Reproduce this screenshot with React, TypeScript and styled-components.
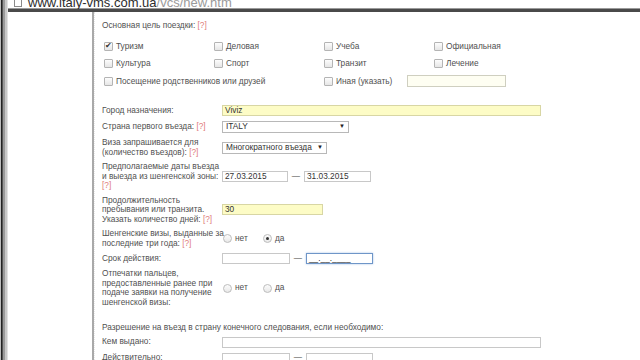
import styled, { createGlobalStyle } from 'styled-components';

const GlobalStyle = createGlobalStyle`
  html, body { margin: 0; padding: 0; background: #fff; }
  body {
    font-family: "Liberation Sans", Arial, sans-serif;
    overflow: hidden;
  }
`;

const Frame = styled.div`
  display: flex;
  height: 360px;
  width: 640px;
  overflow: hidden;
`;

const Stripe = styled.div`
  width: 8px;
  flex-shrink: 0;
  background: linear-gradient(
    to right,
    #bcbcbc 0 1px,
    #222 1px 2px,
    #555 2px 3px,
    #9a9a9a 3px 5px,
    #c8c8c8 5px 7px,
    #e2e2e2 7px 8px
  );
`;

const Window = styled.div`
  flex: 1;
  display: flex;
  flex-direction: column;
  min-height: 0;
`;

const AddressBar = styled.div`
  height: 9px;
  flex-shrink: 0;
  display: flex;
  align-items: flex-end;
  gap: 6px;
  padding-left: 6px;
  overflow: hidden;
  border-bottom: 3px solid #4a4a4a;
  box-shadow: 0 -1px 0 #9a9a9a inset;
`;

const PageIcon = styled.div`
  width: 6px;
  height: 9px;
  margin-bottom: 2px;
  border: 1px solid #8a8a8a;
  background: #fff;
  flex-shrink: 0;
`;

const Url = styled.div`
  font-size: 13px;
  line-height: 13px;
  color: #2c2c2c;
  white-space: nowrap;
  span { color: #9a9a9a; }
`;

const Body = styled.div`
  flex: 1;
  display: flex;
  min-height: 0;
`;

const Sidebar = styled.aside`
  width: 84px;
  flex-shrink: 0;
  background: #fff;
  border-right: 2px solid #a9a9a9;
`;

const Content = styled.main`
  flex: 1;
  padding: 8.5px 0 0 7px;
  color: #505050;
  font-size: 8.3px;
  line-height: 9.5px;
  border-left: 1px dotted #e6e6e6;
`;

const Hint = styled.span`
  color: #e07a7a;
`;

const SectionTitle = styled.div<{ $top?: number }>`
  margin-top: ${(p) => p.$top ?? 0}px;
  white-space: nowrap;
`;

const CheckGrid = styled.div`
  display: grid;
  grid-template-columns: repeat(4, 110px);
  grid-auto-rows: 17.5px;
  align-items: center;
  margin-top: 7.5px;
  padding-left: 2px;
`;

const CheckItem = styled.label<{ $span?: number }>`
  display: flex;
  align-items: center;
  gap: 3px;
  grid-column: span ${(p) => p.$span ?? 1};
  white-space: nowrap;
`;

const Box = styled.span<{ $on?: boolean }>`
  position: relative;
  width: 7px;
  height: 7px;
  border: 1px solid #b4b4b4;
  border-radius: 1px;
  background: linear-gradient(#fdfdfd, #e6e6e6);
  flex-shrink: 0;
  &::after {
    content: ${(p) => (p.$on ? "'✔'" : "''")};
    position: absolute;
    left: 0px;
    top: -2px;
    font-size: 8px;
    line-height: 10px;
    color: #333;
  }
`;

const OtherInput = styled.span`
  display: inline-block;
  width: 97px;
  height: 10px;
  margin-left: 12px;
  border: 1px solid #cfcfc0;
  background: #fefef2;
`;

const Form = styled.div<{ $top: number }>`
  margin-top: ${(p) => p.$top}px;
`;

const Row = styled.div`
  display: grid;
  grid-template-columns: 120px auto;
  align-items: center;
  padding: 2.5px 0;
`;

const Label = styled.div`
  white-space: nowrap;
`;

const Field = styled.div`
  display: flex;
  align-items: center;
`;

const Input = styled.div<{ $w: number; $yellow?: boolean; $focus?: boolean }>`
  box-sizing: border-box;
  width: ${(p) => p.$w}px;
  height: 11px;
  padding: 0 2px;
  font-size: 8.3px;
  line-height: 9px;
  color: #333;
  background: ${(p) => (p.$yellow ? '#fdfcc6' : '#fff')};
  border: 1px solid ${(p) => (p.$focus ? '#6f96c8' : p.$yellow ? '#d8d6a4' : '#c8c8c8')};
  box-shadow: ${(p) => (p.$focus ? '0 0 2px #a9c4e6' : 'none')};
  white-space: nowrap;
  overflow: hidden;
`;

const Select = styled.div<{ $w: number }>`
  box-sizing: border-box;
  width: ${(p) => p.$w}px;
  height: 12px;
  padding: 0 3px;
  display: flex;
  justify-content: space-between;
  align-items: center;
  font-size: 8.3px;
  color: #333;
  background: #fff;
  border: 1px solid #b8b8b8;
  white-space: nowrap;
  i {
    font-style: normal;
    font-size: 6px;
    color: #222;
  }
`;

const Dash = styled.span`
  width: 16px;
  text-align: center;
  color: #444;
`;

const Radios = styled.div`
  display: flex;
  align-items: center;
  padding-left: 1px;
`;

const RadioItem = styled.label`
  width: 40px;
  display: flex;
  align-items: center;
  gap: 3px;
`;

const Dot = styled.span<{ $on?: boolean }>`
  position: relative;
  width: 7px;
  height: 7px;
  border-radius: 50%;
  border: 1px solid #bdbdbd;
  background: linear-gradient(#fcfcfc, #e8e8e8);
  &::after {
    content: '';
    display: ${(p) => (p.$on ? 'block' : 'none')};
    position: absolute;
    left: 2px;
    top: 2px;
    width: 3px;
    height: 3px;
    border-radius: 50%;
    background: #333;
  }
`;

const purposes: { text: string; on?: boolean; span?: number }[] = [
  { text: 'Туризм', on: true },
  { text: 'Деловая' },
  { text: 'Учеба' },
  { text: 'Официальная' },
  { text: 'Культура' },
  { text: 'Спорт' },
  { text: 'Транзит' },
  { text: 'Лечение' },
  { text: 'Посещение родственников или друзей', span: 2 },
];

function Radio({ yes }: { yes?: boolean }) {
  return (
    <Radios>
      <RadioItem>
        <Dot />
        нет
      </RadioItem>
      <RadioItem>
        <Dot $on={yes} />
        да
      </RadioItem>
    </Radios>
  );
}

export default function App() {
  return (
    <>
      <GlobalStyle />
      <Frame>
        <Stripe />
        <Window>
          <AddressBar>
            <PageIcon />
            <Url>
              www.italy-vms.com.ua<span>/vcs/new.htm</span>
            </Url>
          </AddressBar>
          <Body>
            <Sidebar />
            <Content>
              <SectionTitle>
                Основная цель поездки: <Hint>[?]</Hint>
              </SectionTitle>
              <CheckGrid>
                {purposes.map((p) => (
                  <CheckItem key={p.text} $span={p.span}>
                    <Box $on={p.on} />
                    {p.text}
                  </CheckItem>
                ))}
                <CheckItem $span={2}>
                  <Box />
                  Иная (указать)
                  <OtherInput />
                </CheckItem>
              </CheckGrid>

              <Form $top={12.5}>
                <Row>
                  <Label>Город назначения:</Label>
                  <Field>
                    <Input $w={319} $yellow>Viviz</Input>
                  </Field>
                </Row>
                <Row>
                  <Label>
                    Страна первого въезда: <Hint>[?]</Hint>
                  </Label>
                  <Field>
                    <Select $w={127}>
                      ITALY<i>▼</i>
                    </Select>
                  </Field>
                </Row>
                <Row>
                  <Label>
                    Виза запрашивается для
                    <br />
                    (количество въездов): <Hint>[?]</Hint>
                  </Label>
                  <Field>
                    <Select $w={105}>
                      Многократного въезда<i>▼</i>
                    </Select>
                  </Field>
                </Row>
                <Row>
                  <Label>
                    Предполагаемые даты въезда
                    <br />
                    и выезда из шенгенской зоны:
                    <br />
                    <Hint>[?]</Hint>
                  </Label>
                  <Field>
                    <Input $w={66}>27.03.2015</Input>
                    <Dash>—</Dash>
                    <Input $w={67}>31.03.2015</Input>
                  </Field>
                </Row>
                <Row>
                  <Label>
                    Продолжительность
                    <br />
                    пребывания или транзита.
                    <br />
                    Указать количество дней: <Hint>[?]</Hint>
                  </Label>
                  <Field>
                    <Input $w={101} $yellow>30</Input>
                  </Field>
                </Row>
                <Row>
                  <Label>
                    Шенгенские визы, выданные за
                    <br />
                    последние три года: <Hint>[?]</Hint>
                  </Label>
                  <Field>
                    <Radio yes />
                  </Field>
                </Row>
                <Row>
                  <Label>Срок действия:</Label>
                  <Field>
                    <Input $w={68} />
                    <Dash>—</Dash>
                    <Input $w={67} $focus>__.__.____</Input>
                  </Field>
                </Row>
                <Row>
                  <Label>
                    Отпечатки пальцев,
                    <br />
                    предоставленные ранее при
                    <br />
                    подаче заявки на получение
                    <br />
                    шенгенской визы:
                  </Label>
                  <Field>
                    <Radio />
                  </Field>
                </Row>
              </Form>

              <SectionTitle $top={13.5}>
                Разрешение на въезд в страну конечного следования, если необходимо:
              </SectionTitle>
              <Form $top={1.5}>
                <Row>
                  <Label>Кем выдано:</Label>
                  <Field>
                    <Input $w={319} />
                  </Field>
                </Row>
                <Row>
                  <Label>Действительно:</Label>
                  <Field>
                    <Input $w={68} />
                    <Dash>—</Dash>
                    <Input $w={67} />
                  </Field>
                </Row>
              </Form>
            </Content>
          </Body>
        </Window>
      </Frame>
    </>
  );
}
